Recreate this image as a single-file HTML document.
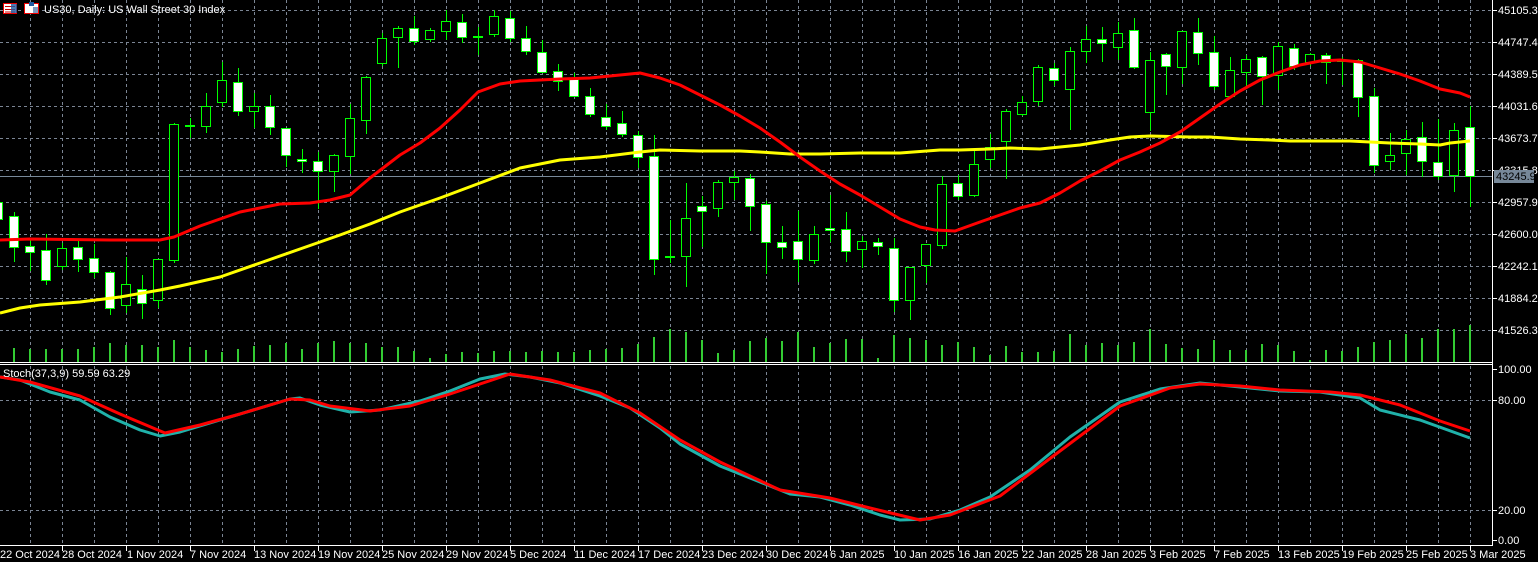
<!DOCTYPE html>
<html><head><meta charset="utf-8"><style>
html,body{margin:0;padding:0;background:#000;width:1538px;height:562px;overflow:hidden}
svg{display:block}
text{font-family:"Liberation Sans",sans-serif;font-size:11px;fill:#fff}
</style></head><body>
<svg width="1538" height="562" viewBox="0 0 1538 562" xmlns="http://www.w3.org/2000/svg" shape-rendering="crispEdges">
<rect width="1538" height="562" fill="#000"/>
<!-- grid -->
<g stroke="#7b8594" stroke-width="1" stroke-dasharray="3,3">
<path d="M30.5 0V545M62.5 0V545M94.5 0V545M126.5 0V545M158.5 0V545M190.5 0V545M222.5 0V545M254.5 0V545M286.5 0V545M318.5 0V545M350.5 0V545M382.5 0V545M414.5 0V545M446.5 0V545M478.5 0V545M510.5 0V545M542.5 0V545M574.5 0V545M606.5 0V545M638.5 0V545M670.5 0V545M702.5 0V545M734.5 0V545M766.5 0V545M798.5 0V545M830.5 0V545M862.5 0V545M894.5 0V545M926.5 0V545M958.5 0V545M990.5 0V545M1022.5 0V545M1054.5 0V545M1086.5 0V545M1118.5 0V545M1150.5 0V545M1182.5 0V545M1214.5 0V545M1246.5 0V545M1278.5 0V545M1310.5 0V545M1342.5 0V545M1374.5 0V545M1406.5 0V545M1438.5 0V545M1470.5 0V545"/>
<path d="M0 10.5H1492M0 42.5H1492M0 74.5H1492M0 106.5H1492M0 138.5H1492M0 170.5H1492M0 202.5H1492M0 234.5H1492M0 266.5H1492M0 298.5H1492M0 330.5H1492M0 400.5H1492M0 510.5H1492"/>
</g>
<path d="M0 176.5H1492" stroke="#778899"/>
<!-- volumes -->
<g stroke="#33cc33" stroke-width="2">
<path d="M-2 347V362M14 348V362M30 349V362M46 349V362M62 349V362M78 349V362M94 347V362M110 343V362M126 345V362M142 345V362M158 347V362M174 340V362M190 347V362M206 350V362M222 352V362M238 349V362M254 346V362M270 345V362M286 343V362M302 349V362M318 343V362M334 341V362M350 343V362M366 343V362M382 347V362M398 347V362M414 351V362M430 358V362M446 354V362M462 352V362M478 353V362M494 351V362M510 351V362M526 352V362M542 351V362M558 352V362M574 352V362M590 350V362M606 349V362M622 348V362M638 344V362M654 337V362M670 329V362M686 332V362M702 340V362M718 353V362M734 350V362M750 341V362M766 338V362M782 341V362M798 332V362M814 347V362M830 343V362M846 339V362M862 339V362M878 358V362M894 335V362M910 338V362M926 340V362M942 345V362M958 342V362M974 347V362M990 355V362M1006 346V362M1022 352V362M1038 352V362M1054 351V362M1070 334V362M1086 345V362M1102 343V362M1118 345V362M1134 342V362M1150 329V362M1166 344V362M1182 348V362M1198 349V362M1214 340V362M1230 350V362M1246 350V362M1262 344V362M1278 345V362M1294 351V362M1310 360V362M1326 350V362M1342 351V362M1358 347V362M1374 342V362M1390 340V362M1406 334V362M1422 338V362M1438 329V362M1454 329V362M1470 325V362"/>
</g>
<!-- wicks -->
<g stroke="#00ff00" stroke-width="1">
<path d="M-1.5 198V222M14.5 212V262M30.5 240V271M46.5 234V285M62.5 243V270M78.5 241V272M94.5 244V278M110.5 271V315M126.5 257V313M142.5 275V319M158.5 259V308M174.5 123V263M190.5 118V138M206.5 93V133M222.5 62V107M238.5 68V116M254.5 93V128M270.5 95V135M286.5 128V167M302.5 149V173M318.5 152V209M334.5 154V192M350.5 104V174M366.5 76V134M382.5 33V66M398.5 26V68M414.5 16V45M430.5 28V42M446.5 10V40M462.5 14V43M478.5 27V55M494.5 10V37M510.5 11V42M526.5 26V55M542.5 40V73M558.5 64V91M574.5 73V97M590.5 88V117M606.5 104V130M622.5 111V137M638.5 131V168M654.5 135V275M670.5 220V263M686.5 183V287M702.5 196V247M718.5 180V217M734.5 171V200M750.5 174V231M766.5 201V274M782.5 226V259M798.5 211V282M814.5 226V264M830.5 195V242M846.5 212V262M862.5 236V268M878.5 238V255M894.5 238V312M910.5 267V320M926.5 244V283M942.5 176V249M958.5 175V200M974.5 149V197M990.5 134V168M1006.5 109V179M1022.5 96V116M1038.5 65V106M1054.5 63V86M1070.5 47V130M1086.5 26V63M1102.5 27V62M1118.5 22V60M1134.5 18V69M1150.5 52V131M1166.5 53V95M1182.5 31V84M1198.5 18V65M1214.5 36V90M1230.5 57V97M1246.5 55V89M1262.5 56V105M1278.5 42V90M1294.5 44V70M1310.5 53V66M1326.5 53V84M1342.5 57V85M1358.5 59V117M1374.5 88V173M1390.5 133V170M1406.5 130V175M1422.5 122V177M1438.5 119V180M1454.5 123V192M1470.5 106V207"/>
</g>
<!-- bodies -->
<g stroke="#00ff00" stroke-width="1">
<g fill="#fff">
<rect x="-6.5" y="202.5" width="9" height="17"/><rect x="9.5" y="216.5" width="9" height="31"/><rect x="25.5" y="246.5" width="9" height="6"/><rect x="41.5" y="250.5" width="9" height="30"/><rect x="73.5" y="247.5" width="9" height="12"/><rect x="89.5" y="258.5" width="9" height="14"/><rect x="105.5" y="272.5" width="9" height="36"/><rect x="137.5" y="289.5" width="9" height="14"/><rect x="185.5" y="125.5" width="9" height="1"/><rect x="233.5" y="82.5" width="9" height="29"/><rect x="265.5" y="106.5" width="9" height="21"/><rect x="281.5" y="128.5" width="9" height="27"/><rect x="297.5" y="159.5" width="9" height="2"/><rect x="313.5" y="161.5" width="9" height="10"/><rect x="409.5" y="28.5" width="9" height="13"/><rect x="457.5" y="22.5" width="9" height="15"/><rect x="473.5" y="36.5" width="9" height="1"/><rect x="505.5" y="18.5" width="9" height="20"/><rect x="521.5" y="38.5" width="9" height="13"/><rect x="537.5" y="52.5" width="9" height="20"/><rect x="553.5" y="71.5" width="9" height="10"/><rect x="569.5" y="79.5" width="9" height="17"/><rect x="585.5" y="96.5" width="9" height="18"/><rect x="601.5" y="117.5" width="9" height="9"/><rect x="617.5" y="123.5" width="9" height="11"/><rect x="633.5" y="135.5" width="9" height="22"/><rect x="649.5" y="156.5" width="9" height="103"/><rect x="665.5" y="256.5" width="9" height="1"/><rect x="697.5" y="206.5" width="9" height="5"/><rect x="745.5" y="178.5" width="9" height="28"/><rect x="761.5" y="204.5" width="9" height="38"/><rect x="777.5" y="242.5" width="9" height="5"/><rect x="793.5" y="241.5" width="9" height="18"/><rect x="825.5" y="228.5" width="9" height="2"/><rect x="841.5" y="229.5" width="9" height="22"/><rect x="873.5" y="242.5" width="9" height="4"/><rect x="889.5" y="248.5" width="9" height="52"/><rect x="953.5" y="183.5" width="9" height="13"/><rect x="1049.5" y="68.5" width="9" height="12"/><rect x="1097.5" y="39.5" width="9" height="4"/><rect x="1129.5" y="30.5" width="9" height="37"/><rect x="1161.5" y="54.5" width="9" height="12"/><rect x="1193.5" y="32.5" width="9" height="21"/><rect x="1209.5" y="52.5" width="9" height="34"/><rect x="1257.5" y="57.5" width="9" height="19"/><rect x="1289.5" y="48.5" width="9" height="18"/><rect x="1321.5" y="55.5" width="9" height="7"/><rect x="1337.5" y="60.5" width="9" height="1"/><rect x="1353.5" y="60.5" width="9" height="37"/><rect x="1369.5" y="96.5" width="9" height="69"/><rect x="1417.5" y="137.5" width="9" height="24"/><rect x="1433.5" y="162.5" width="9" height="14"/><rect x="1465.5" y="127.5" width="9" height="49"/>
</g>
<g fill="#000">
<rect x="57.5" y="248.5" width="9" height="18"/><rect x="121.5" y="284.5" width="9" height="21"/><rect x="153.5" y="259.5" width="9" height="41"/><rect x="169.5" y="124.5" width="9" height="136"/><rect x="201.5" y="106.5" width="9" height="20"/><rect x="217.5" y="80.5" width="9" height="22"/><rect x="249.5" y="106.5" width="9" height="5"/><rect x="329.5" y="155.5" width="9" height="16"/><rect x="345.5" y="118.5" width="9" height="38"/><rect x="361.5" y="77.5" width="9" height="43"/><rect x="377.5" y="38.5" width="9" height="25"/><rect x="393.5" y="28.5" width="9" height="9"/><rect x="425.5" y="30.5" width="9" height="9"/><rect x="441.5" y="21.5" width="9" height="10"/><rect x="489.5" y="16.5" width="9" height="18"/><rect x="681.5" y="218.5" width="9" height="38"/><rect x="713.5" y="182.5" width="9" height="26"/><rect x="729.5" y="177.5" width="9" height="5"/><rect x="809.5" y="234.5" width="9" height="26"/><rect x="857.5" y="241.5" width="9" height="8"/><rect x="905.5" y="267.5" width="9" height="33"/><rect x="921.5" y="244.5" width="9" height="21"/><rect x="937.5" y="184.5" width="9" height="61"/><rect x="969.5" y="164.5" width="9" height="31"/><rect x="985.5" y="147.5" width="9" height="12"/><rect x="1001.5" y="111.5" width="9" height="30"/><rect x="1017.5" y="102.5" width="9" height="12"/><rect x="1033.5" y="67.5" width="9" height="34"/><rect x="1065.5" y="51.5" width="9" height="38"/><rect x="1081.5" y="39.5" width="9" height="12"/><rect x="1113.5" y="33.5" width="9" height="14"/><rect x="1145.5" y="60.5" width="9" height="52"/><rect x="1177.5" y="31.5" width="9" height="36"/><rect x="1225.5" y="70.5" width="9" height="26"/><rect x="1241.5" y="59.5" width="9" height="13"/><rect x="1273.5" y="46.5" width="9" height="29"/><rect x="1305.5" y="54.5" width="9" height="8"/><rect x="1385.5" y="155.5" width="9" height="6"/><rect x="1401.5" y="139.5" width="9" height="14"/><rect x="1449.5" y="130.5" width="9" height="45"/>
</g>
</g>
<!-- MAs -->
<g fill="none" stroke-width="3" shape-rendering="auto" stroke-linejoin="round">
<polyline stroke="#ffff00" points="0,313 20,308 40,305 80,302 120,297 160,290 180,286 220,277 260,263 300,249 340,235 370,224 400,212 440,198 480,183 520,168 560,160 600,157 640,152 660,150 700,151 740,151 760,152 790,154 820,154 860,153 900,153 940,150 960,150 990,149 1010,148 1040,149 1080,145 1110,140 1130,137 1150,136 1190,137 1210,137 1240,139 1270,140 1290,141 1330,141 1350,141 1370,142 1390,143 1420,144 1440,145 1450,143 1470,141"/>
<polyline stroke="#ff0000" points="0,240 30,239 110,240 160,240 174,237 200,226 240,212 280,204 310,203 330,200 350,195 370,178 400,155 420,143 440,128 460,110 478,92 500,84 520,81 540,80 560,79 590,78 610,76 630,74 640,73 660,78 680,85 700,95 720,105 740,116 760,128 780,142 800,157 820,171 840,184 860,195 880,207 900,219 920,227 935,230 955,231 980,222 1000,215 1020,208 1040,203 1060,193 1080,181 1100,171 1120,160 1140,152 1160,143 1180,132 1200,118 1220,104 1240,91 1260,80 1280,72 1300,65 1320,61 1340,60 1360,62 1380,68 1400,74 1420,81 1440,89 1460,93 1470,97"/>
</g>
<!-- separators / axes -->
<path d="M0 362.5H1492M0 364.5H1492M0 545.5H1492M1492.5 0V546" stroke="#fff"/>
<!-- stoch -->
<g fill="none" stroke-width="3" shape-rendering="auto" stroke-linejoin="round">
<polyline stroke="#20b2aa" points="0,377 20,380 50,392 80,400 110,417 140,430 160,436 180,432 220,420 260,408 290,399 300,398 320,405 350,412 380,410 420,401 450,391 480,379 505,374 530,377 560,383 600,396 630,408 660,428 680,444 720,466 760,482 790,494 820,497 850,505 880,515 900,520 930,519 960,510 990,497 1030,470 1070,437 1120,402 1160,389 1200,383 1240,387 1280,391 1320,392 1360,398 1380,410 1420,420 1470,438"/>
<polyline stroke="#ff0000" points="0,377 30,382 80,396 120,414 165,433 200,425 240,414 290,399 310,400 330,406 370,411 410,406 450,394 510,374 550,380 600,393 640,413 680,440 720,462 780,490 830,498 870,508 920,520 950,515 1000,496 1040,466 1080,436 1120,406 1170,388 1200,384 1240,386 1280,390 1330,392 1360,395 1400,405 1440,421 1470,431"/>
</g>
<text x="3" y="377">Stoch(37,3,9) 59.59 63.29</text>
<!-- title + icons -->
<g>
<rect x="3.5" y="3.5" width="13" height="10" fill="#fff" stroke="#e00"/>
<path d="M5 6.5H15M5 9.5H15M5 12H15" stroke="#c00"/>
<rect x="11" y="4" width="6" height="9" fill="#1e5aa0" opacity=".8"/>
<rect x="24.5" y="3.5" width="14" height="10" fill="#fff" stroke="#e00"/>
<rect x="29" y="2" width="5" height="4" fill="#1e5aa0"/>
<rect x="33" y="7" width="5" height="6" fill="#7d9ac0"/>
</g>
<text x="44" y="13">US30, Daily:  US Wall Street 30 Index</text>
<!-- price axis -->
<g stroke="#fff"><path d="M1492 10.5h5M1492 42.5h5M1492 74.5h5M1492 106.5h5M1492 138.5h5M1492 170.5h5M1492 202.5h5M1492 234.5h5M1492 266.5h5M1492 298.5h5M1492 330.5h5M1492 369.5h5M1492 400.5h5M1492 510.5h5M1492 540.5h5"/></g>
<g>
<text x="1498" y="14">45105.3</text>
<text x="1498" y="46">44747.4</text>
<text x="1498" y="78">44389.5</text>
<text x="1498" y="110">44031.6</text>
<text x="1498" y="142">43673.7</text>
<text x="1498" y="174">43315.8</text>
<text x="1498" y="206">42957.9</text>
<text x="1498" y="238">42600.0</text>
<text x="1498" y="270">42242.1</text>
<text x="1498" y="302">41884.2</text>
<text x="1498" y="334">41526.3</text>
<text x="1498" y="373">100.00</text>
<text x="1498" y="404">80.00</text>
<text x="1498" y="514">20.00</text>
<text x="1498" y="544">0.00</text>
</g>
<rect x="1494" y="170" width="40" height="13" fill="#778899"/>
<text x="1496" y="180" style="fill:#000">43245.9</text>
<!-- time axis -->
<g stroke="#fff"><path d="M62.5 546v5M126.5 546v5M190.5 546v5M254.5 546v5M318.5 546v5M382.5 546v5M446.5 546v5M510.5 546v5M574.5 546v5M638.5 546v5M702.5 546v5M766.5 546v5M830.5 546v5M894.5 546v5M958.5 546v5M1022.5 546v5M1086.5 546v5M1150.5 546v5M1214.5 546v5M1278.5 546v5M1342.5 546v5M1406.5 546v5M1470.5 546v5"/></g>
<g>
<text x="0" y="558">22 Oct 2024</text>
<text x="62" y="558">28 Oct 2024</text>
<text x="127" y="558">1 Nov 2024</text>
<text x="190" y="558">7 Nov 2024</text>
<text x="254" y="558">13 Nov 2024</text>
<text x="318" y="558">19 Nov 2024</text>
<text x="382" y="558">25 Nov 2024</text>
<text x="446" y="558">29 Nov 2024</text>
<text x="510" y="558">5 Dec 2024</text>
<text x="574" y="558">11 Dec 2024</text>
<text x="638" y="558">17 Dec 2024</text>
<text x="702" y="558">23 Dec 2024</text>
<text x="766" y="558">30 Dec 2024</text>
<text x="830" y="558">6 Jan 2025</text>
<text x="894" y="558">10 Jan 2025</text>
<text x="958" y="558">16 Jan 2025</text>
<text x="1022" y="558">22 Jan 2025</text>
<text x="1086" y="558">28 Jan 2025</text>
<text x="1150" y="558">3 Feb 2025</text>
<text x="1214" y="558">7 Feb 2025</text>
<text x="1278" y="558">13 Feb 2025</text>
<text x="1342" y="558">19 Feb 2025</text>
<text x="1406" y="558">25 Feb 2025</text>
<text x="1470" y="558">3 Mar 2025</text>
</g>
</svg>
</body></html>
